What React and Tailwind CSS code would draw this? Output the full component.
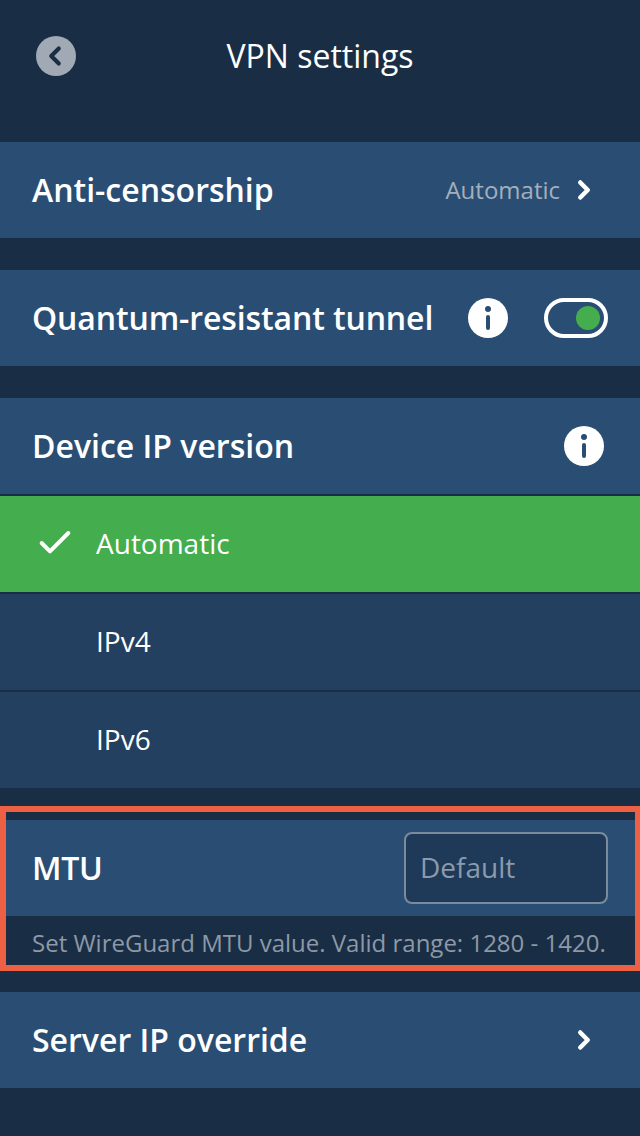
import React from 'react';
import { ChevronLeft, ChevronRight, Check } from 'lucide-react';

const font = { fontFamily: '"Open Sans", sans-serif' };

const InfoIcon = () => (
  <svg width="40" height="40" viewBox="0 0 40 40">
    <circle cx="20" cy="20" r="20" fill="#fff" />
    <circle cx="20" cy="11" r="3" fill="#2a4e73" />
    <rect x="18" y="17" width="4" height="15" rx="2" fill="#2a4e73" />
  </svg>
);

const Row = ({ children }) => (
  <div className="flex h-[96px] items-center justify-between bg-[#2a4e73] pl-[32px] pr-[36px]">{children}</div>
);

const Title = ({ children, className = '' }) => (
  <span className={`text-[32px] font-semibold leading-none text-white ${className}`}>{children}</span>
);

const Option = ({ label }) => (
  <div className="mt-[2px] flex h-[96px] items-center bg-[#234060] pb-[2px] pl-[96px] text-[28px] text-white">{label}</div>
);

export default function App() {
  return (
    <div className="h-[1136px] w-[640px] overflow-hidden bg-[#192e45]" style={font}>
      {/* header */}
      <div className="relative flex h-[142px] items-start justify-center pt-[32px]">
        <div className="absolute left-[36px] top-[36px] flex h-10 w-10 items-center justify-center rounded-full bg-[#a0a9b4]">
          <ChevronLeft size={30} strokeWidth={3.3} className="mr-[2px] text-[#192e45]" />
        </div>
        <span className="text-[32px] leading-[48px] text-white">VPN settings</span>
      </div>

      <div className="flex flex-col">
        <Row>
          <Title>Anti-censorship</Title>
          <div className="flex items-center">
            <span className="text-[24px] text-[#a3afbd]">Automatic</span>
            <ChevronRight size={30} strokeWidth={3.6} className="ml-[9px] mr-[5px] text-white" />
          </div>
        </Row>

        <div className="mt-8">
          <Row>
            <Title className="tracking-[-0.12px]">Quantum-resistant tunnel</Title>
            <div className="mr-[-4px] flex items-center gap-[36px]">
              <InfoIcon />
              <div className="flex h-10 w-16 items-center justify-end rounded-full border-4 border-white pr-[4px]">
                <div className="h-6 w-6 rounded-full bg-[#44ad4d]" />
              </div>
            </div>
          </Row>
        </div>

        <div className="mt-8">
          <Row>
            <Title>Device IP version</Title>
            <InfoIcon />
          </Row>
          <div className="mt-[2px] flex h-[96px] items-center bg-[#44ad4d] pb-[2px] pl-[35px] text-[28px] text-white">
            <Check size={40} strokeWidth={2.4} className="mr-[21px]" />
            Automatic
          </div>
          <Option label="IPv4" />
          <Option label="IPv6" />
        </div>

        {/* MTU */}
        <div className="relative mt-[32px] h-[172px]">
          <Row>
            <Title className="tracking-[-0.3px]">MTU</Title>
            <div className="mr-[-4px] flex h-[72px] w-[204px] items-center rounded-lg border-2 border-[#7a8b9c] bg-[#1f3a58] pb-[2px] pl-[14px] text-[28px] text-[#8b9bab]">
              Default
            </div>
          </Row>
          <p className="pl-[32px] pt-[9px] text-[24px] leading-[36px] whitespace-nowrap text-[#8d99a6]">
            Set WireGuard MTU value. Valid range: 1280 - 1420.
          </p>
          <div className="pointer-events-none absolute left-0 top-[-14px] h-[165px] w-[640px] border-[6px] border-r-[5px] border-[#ee6044]" />
        </div>

        <Row>
          <Title>Server IP override</Title>
          <ChevronRight size={30} strokeWidth={3.6} className="mr-[5px] text-white" />
        </Row>
      </div>
    </div>
  );
}
